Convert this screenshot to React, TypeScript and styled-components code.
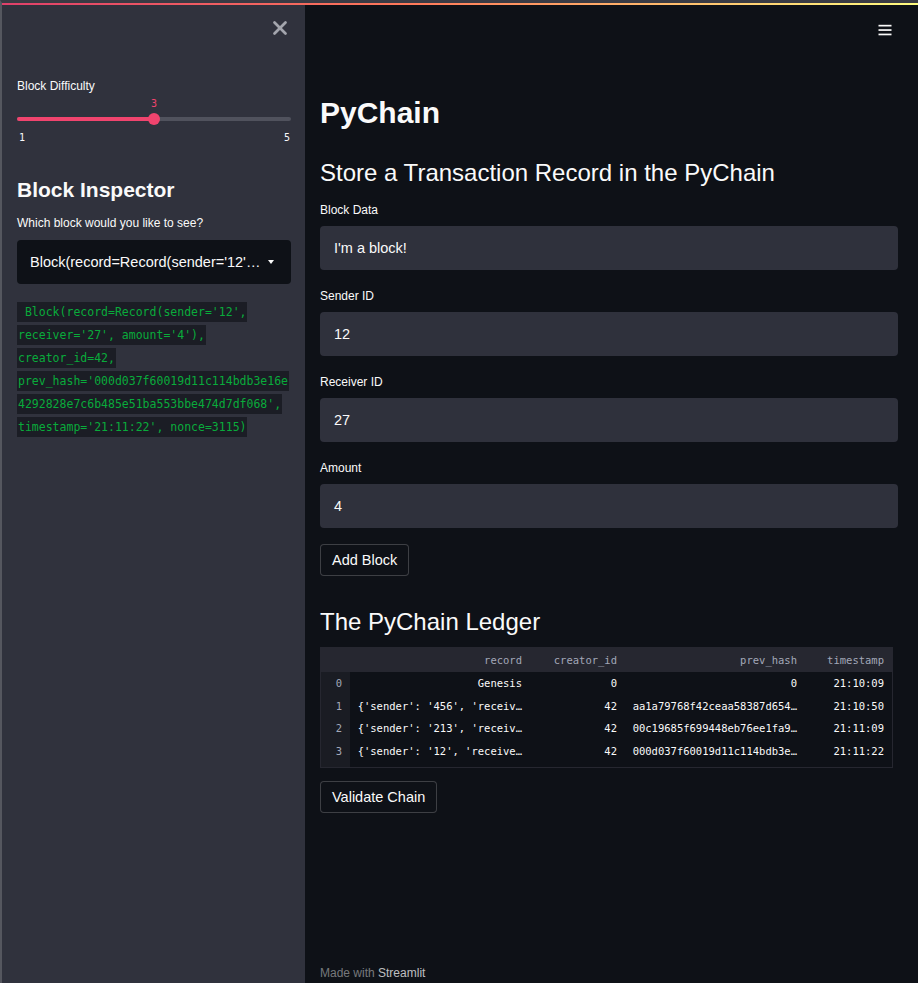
import React from "react";
import styled, { createGlobalStyle } from "styled-components";
import { X } from "lucide-react";

const GlobalStyle = createGlobalStyle`
  html, body {
    margin: 0;
    padding: 0;
    background: #0e1117;
  }
  body {
    font-family: "Liberation Sans", Arial, sans-serif;
    color: #fafafa;
  }
  * { box-sizing: border-box; }
`;

const Page = styled.div`
  height: 983px;
  display: flex;
  flex-direction: column;
  border-top: 3px solid #3a3b44;
  border-left: 2px solid #55575f;
  overflow: hidden;
`;

const Decoration = styled.div`
  flex: none;
  height: 2px;
  background: linear-gradient(90deg, #e0406a, #ff7a5a 45%, #fffd80);
`;

const Body = styled.div`
  flex: 1;
  display: flex;
  min-height: 0;
`;

const Sidebar = styled.aside`
  width: 303px;
  flex: none;
  background: #30323d;
  padding: 0 14px 0 15px;
  display: flex;
  flex-direction: column;
`;

const CloseRow = styled.div`
  height: 46px;
  display: flex;
  align-items: center;
  justify-content: flex-end;
  color: #a3a5ad;
`;

const Label = styled.div<{ $top?: number }>`
  font-size: 12px;
  line-height: 16px;
  color: #fafafa;
  margin-top: ${p => p.$top ?? 0}px;
`;

const SliderBox = styled.div`
  position: relative;
  height: 34px;
`;

const SliderValue = styled.div`
  position: absolute;
  top: 4px;
  transform: translateX(-50%);
  font-family: "DejaVu Sans Mono", monospace;
  font-size: 10px;
  line-height: 12px;
  color: #f0446e;
`;

const Track = styled.div`
  position: absolute;
  left: 0;
  right: 0;
  top: 23px;
  height: 4px;
  border-radius: 2px;
  background: #50525d;
  overflow: hidden;
`;

const TrackFill = styled.div`
  height: 100%;
  background: #f0446e;
`;

const Thumb = styled.div`
  position: absolute;
  top: 19px;
  width: 12px;
  height: 12px;
  margin-left: -6px;
  border-radius: 50%;
  background: #f0446e;
`;

const Ticks = styled.div`
  margin-top: 4px;
  display: flex;
  justify-content: space-between;
  padding: 0 1px 0 2px;
  font-family: "DejaVu Sans Mono", monospace;
  font-size: 10px;
  line-height: 12px;
  color: #fafafa;
`;

const SideHeading = styled.h2`
  margin: 33px 0 0;
  font-size: 21px;
  line-height: 26px;
  font-weight: 700;
`;

const Select = styled.div`
  margin-top: 9px;
  height: 44px;
  background: #0e1117;
  border-radius: 4px;
  display: flex;
  align-items: center;
  justify-content: space-between;
  padding: 0 17px 0 13px;
  font-size: 14.5px;
  color: #fafafa;
`;

const Caret = styled.span`
  width: 0;
  height: 0;
  border-left: 3.5px solid transparent;
  border-right: 3.5px solid transparent;
  border-top: 4px solid #fafafa;
`;

const CodeBlock = styled.div`
  margin-top: 18px;
  display: flex;
  flex-direction: column;
`;

const CodeLine = styled.div`
  height: 23px;
`;

const Code = styled.code`
  display: inline-block;
  white-space: pre;
  height: 20px;
  line-height: 20px;
  padding: 0 1px;
  background: #1b1d25;
  color: #09ab3b;
  font-family: "DejaVu Sans Mono", monospace;
  font-size: 11.5px;
`;

const Main = styled.main`
  flex: 1;
  display: flex;
  flex-direction: column;
  padding: 0 20px 0 15px;
`;

const Header = styled.div`
  height: 50px;
  display: flex;
  align-items: center;
  justify-content: flex-end;
  padding-right: 6px;
`;

const Title = styled.h1`
  margin: 40px 0 0;
  font-size: 30px;
  line-height: 36px;
  font-weight: 700;
`;

const SubTitle = styled.h2<{ $top: number }>`
  margin: ${p => p.$top}px 0 0;
  font-size: 24px;
  line-height: 29px;
  font-weight: 400;
`;

const Field = styled.div<{ $top: number }>`
  margin-top: ${p => p.$top}px;
  display: flex;
  flex-direction: column;
  gap: 8px;
`;

const Input = styled.div`
  height: 44px;
  background: #2f313c;
  border-radius: 4px;
  display: flex;
  align-items: center;
  padding: 0 14px;
  font-size: 14.5px;
  color: #fafafa;
`;

const Button = styled.button<{ $top: number }>`
  align-self: flex-start;
  margin-top: ${p => p.$top}px;
  height: 32px;
  padding: 0 11px;
  background: #0e1117;
  border: 1px solid rgba(250, 250, 250, 0.2);
  border-radius: 4px;
  color: #fafafa;
  font-family: "Liberation Sans", Arial, sans-serif;
  font-size: 14.5px;
`;

const Table = styled.div`
  margin-top: 11px;
  width: 573px;
  border: 1px solid #262730;
  font-family: "DejaVu Sans Mono", monospace;
  font-size: 10.5px;
`;

const Row = styled.div<{ $head?: boolean; $h: number }>`
  display: grid;
  grid-template-columns: 29px 180px 95px 180px 87px;
  height: ${p => p.$h}px;
  background: ${p => (p.$head ? "#262730" : "#0e1117")};
`;

const Cell = styled.div<{ $head?: boolean; $index?: boolean }>`
  display: flex;
  align-items: center;
  justify-content: flex-end;
  padding-right: 8px;
  white-space: pre;
  color: ${p => (p.$head || p.$index ? "#a3a8b8" : "#fafafa")};
  background: ${p => (p.$index && !p.$head ? "#1a1c23" : "transparent")};
`;

const Footer = styled.div`
  margin-top: auto;
  padding-bottom: 2px;
  font-size: 12px;
  line-height: 16px;
  color: rgba(250, 250, 250, 0.45);
  span {
    color: rgba(250, 250, 250, 0.75);
  }
`;

const codeLines = [
  " Block(record=Record(sender='12',",
  "receiver='27', amount='4'),",
  "creator_id=42,",
  "prev_hash='000d037f60019d11c114bdb3e16e",
  "4292828e7c6b485e51ba553bbe474d7df068',",
  "timestamp='21:11:22', nonce=3115)",
];

const columns = ["", "record", "creator_id", "prev_hash", "timestamp"];

const rows = [
  ["0", "Genesis", "0", "0", "21:10:09"],
  ["1", "{'sender': '456', 'receiv…", "42", "aa1a79768f42ceaa58387d654…", "21:10:50"],
  ["2", "{'sender': '213', 'receiv…", "42", "00c19685f699448eb76ee1fa9…", "21:11:09"],
  ["3", "{'sender': '12', 'receive…", "42", "000d037f60019d11c114bdb3e…", "21:11:22"],
];

const fields = [
  { label: "Block Data", value: "I'm a block!" },
  { label: "Sender ID", value: "12" },
  { label: "Receiver ID", value: "27" },
  { label: "Amount", value: "4" },
];

function Hamburger() {
  return (
    <svg width="14" height="12" viewBox="0 0 14 12">
      <rect x="0.5" y="0.8" width="13" height="1.7" fill="#fafafa" />
      <rect x="0.5" y="5.2" width="13" height="1.7" fill="#fafafa" />
      <rect x="0.5" y="9.6" width="13" height="1.7" fill="#fafafa" />
    </svg>
  );
}

export default function App() {
  const difficulty = 3;
  const pct = ((difficulty - 1) / 4) * 100;

  return (
    <Page>
      <GlobalStyle />
      <Decoration />
      <Body>
        <Sidebar>
          <CloseRow>
            <X size={22} strokeWidth={3} />
          </CloseRow>
          <Label $top={27}>Block Difficulty</Label>
          <SliderBox>
            <SliderValue style={{ left: `${pct}%` }}>{difficulty}</SliderValue>
            <Track>
              <TrackFill style={{ width: `${pct}%` }} />
            </Track>
            <Thumb style={{ left: `${pct}%` }} />
          </SliderBox>
          <Ticks>
            <span>1</span>
            <span>5</span>
          </Ticks>
          <SideHeading>Block Inspector</SideHeading>
          <Label $top={12}>Which block would you like to see?</Label>
          <Select>
            <span>Block(record=Record(sender='12'…</span>
            <Caret />
          </Select>
          <CodeBlock>
            {codeLines.map((l, i) => (
              <CodeLine key={i}>
                <Code>{l}</Code>
              </CodeLine>
            ))}
          </CodeBlock>
        </Sidebar>

        <Main>
          <Header>
            <Hamburger />
          </Header>
          <Title>PyChain</Title>
          <SubTitle $top={27}>Store a Transaction Record in the PyChain</SubTitle>
          {fields.map((f, i) => (
            <Field key={f.label} $top={i === 0 ? 15 : 18}>
              <Label>{f.label}</Label>
              <Input>{f.value}</Input>
            </Field>
          ))}
          <Button $top={16}>Add Block</Button>
          <SubTitle $top={31}>The PyChain Ledger</SubTitle>
          <Table>
            <Row $head $h={24}>
              {columns.map((c, i) => (
                <Cell key={i} $head $index={i === 0}>{c}</Cell>
              ))}
            </Row>
            {rows.map(r => (
              <Row key={r[0]} $h={22.5}>
                {r.map((v, i) => (
                  <Cell key={i} $index={i === 0}>{v}</Cell>
                ))}
              </Row>
            ))}
            <Row $h={5}>
              <Cell $index />
            </Row>
          </Table>
          <Button $top={13}>Validate Chain</Button>
          <Footer>
            Made with <span>Streamlit</span>
          </Footer>
        </Main>
      </Body>
    </Page>
  );
}
